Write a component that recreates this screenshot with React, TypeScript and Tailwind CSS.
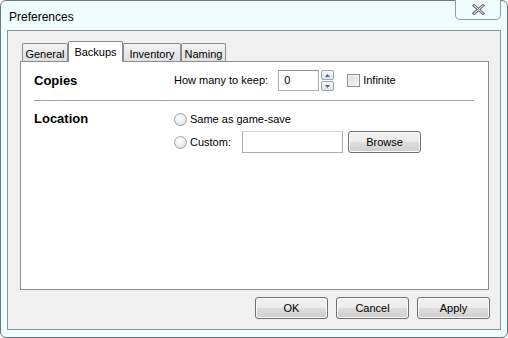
import React from 'react';

const font = { fontFamily: '"Liberation Sans", Arial, sans-serif' };

function WinButton({ label, className = '' }: { label: string; className?: string }) {
  return (
    <div
      className={`h-[22px] w-[73px] rounded-[3px] border border-[#707070] bg-[linear-gradient(#f2f2f2_0%,#ebebeb_50%,#dddddd_50%,#cfcfcf_100%)] shadow-[inset_0_0_0_1px_#fcfcfc] flex items-center justify-center text-[11px] text-black ${className}`}
    >
      {label}
    </div>
  );
}

function Radio() {
  return (
    <div className="w-[13px] h-[13px] rounded-full border border-[#a2a2a2] bg-[radial-gradient(circle_at_40%_35%,#ffffff_0%,#ececec_55%,#d0d0d0_100%)] shrink-0" />
  );
}

function Tab({ label, w, selected }: { label: string; w: string; selected?: boolean }) {
  return selected ? (
    <div className={`${w} h-[21px] -mb-px border border-b-0 border-[#898c95] bg-white rounded-t-[2px] flex items-start justify-center pt-[2px] text-[11px] z-10 relative`}>
      {label}
    </div>
  ) : (
    <div className={`${w} h-[18px] border border-b-0 border-[#898c95] bg-[linear-gradient(#f3f3f3,#e0e0e0)] rounded-t-[2px] flex items-start justify-center pt-[2px] text-[11px]`}>
      {label}
    </div>
  );
}

export default function App() {
  return (
    <div className="w-[508px] h-[338px] bg-white" style={font}>
      <div className="relative w-[508px] h-[338px] border border-[#6d787d] rounded-[6px] bg-[#eefcfd] flex flex-col">
        {/* Title bar */}
        <div className="h-[29px] shrink-0 flex items-center pl-[8px] pt-[2px] text-[12px] text-black">
          Preferences
        </div>
        <div className="absolute top-[-1px] right-[6px] w-[46px] h-[20px] border border-t-0 border-[#8b9da3] rounded-b-[5px] bg-[#eefcfd] flex items-center justify-center">
          <svg width="13" height="11" viewBox="0 0 13 11">
            <path d="M2 1.5 L11 9.5 M11 1.5 L2 9.5" stroke="#6e6e6e" strokeWidth="3" strokeLinecap="square" />
            <path d="M2 1.5 L11 9.5 M11 1.5 L2 9.5" stroke="#ffffff" strokeWidth="1" strokeLinecap="square" />
          </svg>
        </div>

        {/* Client area */}
        <div className="ml-[6px] w-[494px] h-[300px] border border-[#8c9498] bg-[#f0f0f0] flex flex-col">
          <div className="pl-[12px] pt-[10px] flex flex-col">
            <div className="flex items-end h-[20px] pl-[2px]">
              <Tab label="General" w="w-[46px]" />
              <Tab label="Backups" w="w-[55px]" selected />
              <Tab label="Inventory" w="w-[58px]" />
              <Tab label="Naming" w="w-[45px]" />
            </div>
            <div className="w-[469px] h-[229px] border border-[#898c95] bg-white pl-[13px] pt-[8px] flex flex-col">
              {/* Copies */}
              <div className="flex items-center h-[21px]">
                <div className="w-[140px] font-bold text-[13px]">Copies</div>
                <div className="text-[11px]">How many to keep:</div>
                <div className="ml-[10px] w-[41px] h-[21px] border border-[#abadb3] border-t-[#8e8f8f] bg-white text-[11px] flex items-center pl-[5px]">
                  0
                </div>
                <div className="ml-[2px] flex flex-col gap-[1px]">
                  <div className="w-[13px] h-[10px] border border-[#a5a5a5] rounded-[2px] bg-[linear-gradient(#f8f8f8,#e2e2e2)] flex items-center justify-center">
                    <svg width="5" height="3" viewBox="0 0 5 3"><path d="M0 3 L2.5 0 L5 3 Z" fill="#3a6ea5" /></svg>
                  </div>
                  <div className="w-[13px] h-[10px] border border-[#a5a5a5] rounded-[2px] bg-[linear-gradient(#f8f8f8,#e2e2e2)] flex items-center justify-center">
                    <svg width="5" height="3" viewBox="0 0 5 3"><path d="M0 0 L2.5 3 L5 0 Z" fill="#3a6ea5" /></svg>
                  </div>
                </div>
                <div className="ml-[13px] w-[13px] h-[13px] border border-[#8e8f8f] bg-[linear-gradient(135deg,#dcdcdc,#f6f6f6)] shadow-[inset_0_0_0_1px_#f4f4f4]" />
                <div className="ml-[3px] text-[11px]">Infinite</div>
              </div>

              <div className="mt-[9px] w-[440px] h-px bg-[#a0a0a0]" />

              {/* Location */}
              <div className="mt-[10px] flex">
                <div className="w-[140px] font-bold text-[13px] leading-[16px]">Location</div>
                <div className="flex flex-col">
                  <div className="flex items-center h-[16px] gap-[3px] text-[11px]">
                    <Radio />
                    Same as game-save
                  </div>
                  <div className="mt-[4px] flex items-center h-[22px] text-[11px]">
                    <Radio />
                    <span className="ml-[3px] w-[52px]">Custom:</span>
                    <div className="w-[101px] h-[22px] border border-[#abadb3] border-t-[#d5d5d5] bg-white" />
                    <WinButton label="Browse" className="ml-[5px] h-[21px]" />
                  </div>
                </div>
              </div>
            </div>
          </div>
          <div className="mt-[7px] flex justify-end gap-[8px] pr-[10px]">
            <WinButton label="OK" />
            <WinButton label="Cancel" />
            <WinButton label="Apply" />
          </div>
        </div>
      </div>
    </div>
  );
}
